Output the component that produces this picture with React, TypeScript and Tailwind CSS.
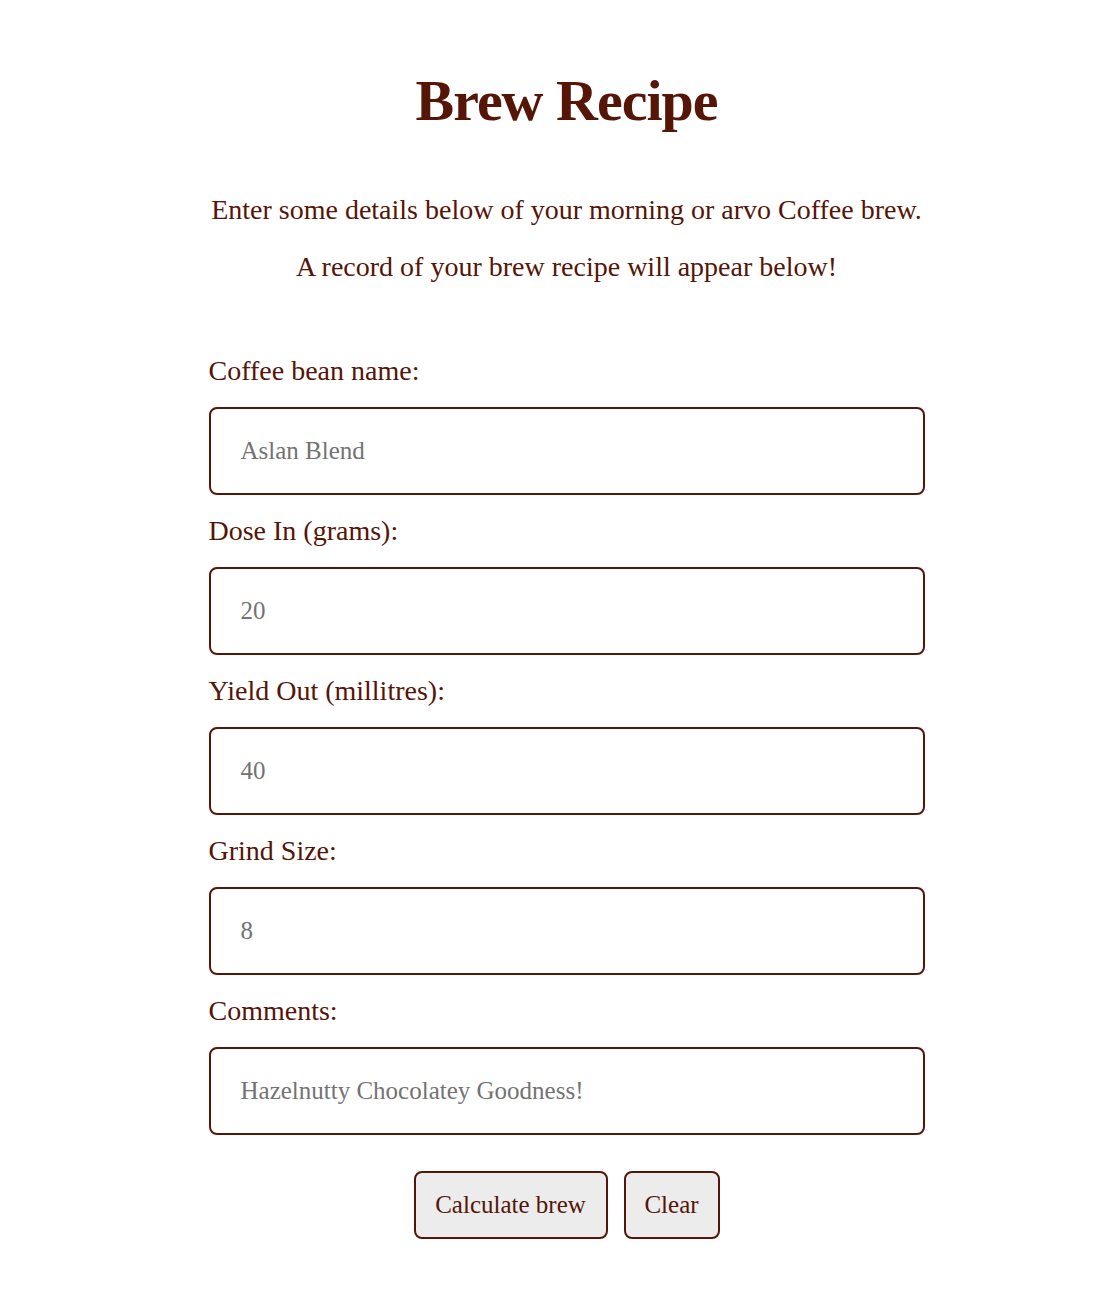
const fields = [
  { id: "bean", label: "Coffee bean name:", placeholder: "Aslan Blend" },
  { id: "dose", label: "Dose In (grams):", placeholder: "20" },
  { id: "yield", label: "Yield Out (millitres):", placeholder: "40" },
  { id: "grind", label: "Grind Size:", placeholder: "8" },
  { id: "comments", label: "Comments:", placeholder: "Hazelnutty Chocolatey Goodness!" },
];

export default function App() {
  return (
    <div className="min-h-[1312px] bg-white pl-[23px] text-[#551507]" style={{ fontFamily: "'Liberation Serif', 'DejaVu Serif', serif" }}>
      <div className="mx-auto w-[716px] pt-[61px]">
        <h1 className="text-center text-[58px] font-bold leading-[80px] tracking-[-1px]">Brew Recipe</h1>
        <p className="mt-[51px] text-center text-[28px] leading-[36px]">
          Enter some details below of your morning or arvo Coffee brew.
        </p>
        <p className="mt-[21px] text-center text-[28px] leading-[36px]">
          A record of your brew recipe will appear below!
        </p>

        <form className="mt-[68px]" onSubmit={(e) => e.preventDefault()}>
          {fields.map((f) => (
            <div key={f.id} className="pb-[18px]">
              <label htmlFor={f.id} className="block text-[28px] leading-[36px]">
                {f.label}
              </label>
              <input
                id={f.id}
                type="text"
                placeholder={f.placeholder}
                className="mt-[18px] block h-[88px] w-full rounded-[8px] border-2 border-[#551507] px-[30px] text-[25px] placeholder:text-[#737373] focus:outline-none"
              />
            </div>
          ))}
          <div className="mt-[18px] flex justify-center gap-[16px]">
            <button type="submit" className="h-[68px] w-[194px] rounded-[8px] border-2 border-[#551507] bg-[#ececec] text-[25px]">
              Calculate brew
            </button>
            <button type="reset" className="h-[68px] w-[96px] rounded-[8px] border-2 border-[#551507] bg-[#ececec] text-[25px]">
              Clear
            </button>
          </div>
        </form>
      </div>
    </div>
  );
}
